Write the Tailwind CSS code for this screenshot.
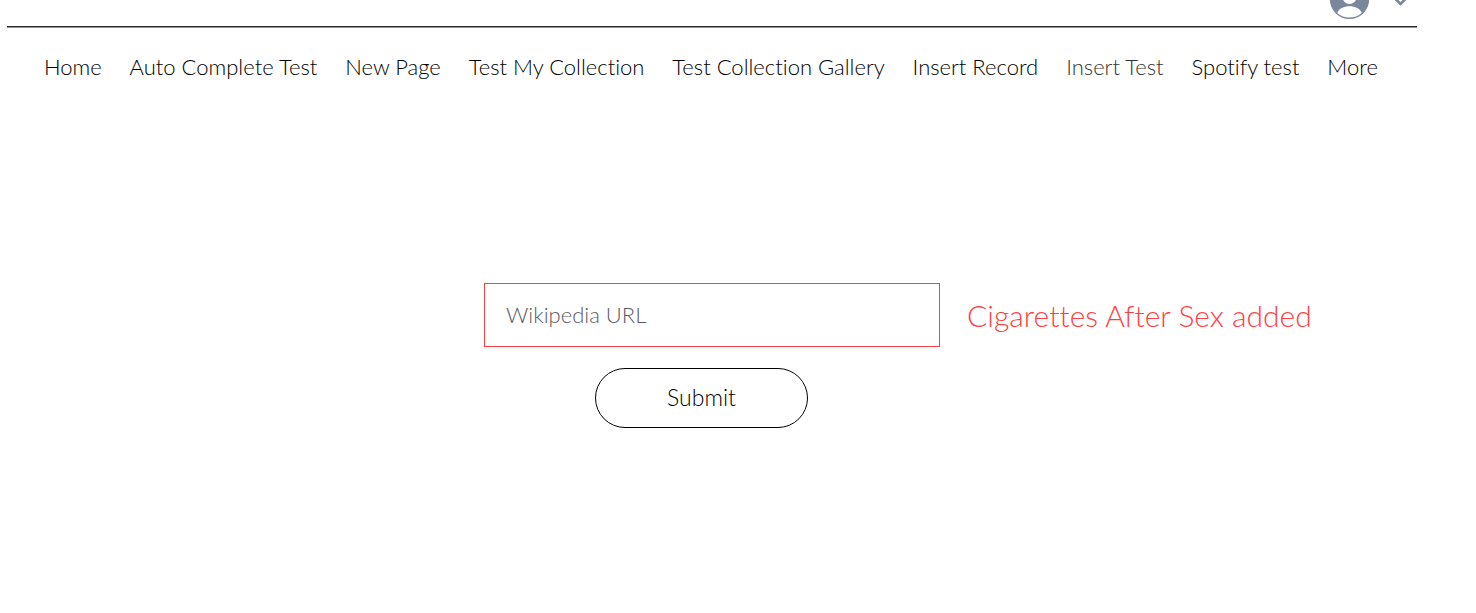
<!DOCTYPE html>
<html lang="en">
<head>
<meta charset="utf-8">
<meta name="viewport" content="width=device-width, initial-scale=1">
<title>Insert Test</title>
<script src="https://cdn.jsdelivr.net/npm/@tailwindcss/browser@4"></script>
</head>
<body class="bg-white font-['Lato',sans-serif] font-light text-black [font-variant-ligatures:none]">
<header class="ml-[7px] mr-[59px]">
  <div class="flex h-[26px] items-start justify-end pr-2">
    <button type="button" aria-label="Account menu" class="flex items-start gap-6">
      <svg class="h-5 w-10" viewBox="0 0 40 20" aria-hidden="true">
        <circle cx="20.500" cy="-0.800" r="19.700" fill="#7a879b"/>
        <circle cx="20.500" cy="-3" r="7" fill="#fff"/>
        <path d="M8.300 13C10 8.500 15 6.300 20.500 6.300s10.500 2.200 12.200 6.700C29.500 16 25 17.500 20.500 17.500S11.500 16 8.300 13Z" fill="#fff"/>
      </svg>
      <svg class="h-2 w-4" viewBox="0 0 16 8" fill="none" stroke="#7a879b" stroke-width="2.600" aria-hidden="true"><path d="M1-2.500 7.500 4 14-2.500"/></svg>
    </button>
  </div>
  <div class="h-px bg-[#2a2a2c]"></div>
  <div class="h-px bg-[#949494]"></div>
  <nav aria-label="Site" class="flex justify-between whitespace-nowrap pt-[23px] pr-[39px] pl-[37px] text-[22px] leading-8">
    <a href="#">Home</a>
    <a href="#">Auto Complete Test</a>
    <a href="#">New Page</a>
    <a href="#">Test My Collection</a>
    <a href="#">Test Collection Gallery</a>
    <a href="#">Insert Record</a>
    <a href="#" aria-current="page" class="text-[#333333]">Insert Test</a>
    <a href="#">Spotify test</a>
    <a href="#">More</a>
  </nav>
</header>
<main class="pt-[200px] pl-[484px]">
  <form class="flex items-start gap-[27px]">
    <div class="flex w-[456px] flex-col gap-[21px]">
      <input type="text" aria-label="Wikipedia URL" placeholder="Wikipedia URL" class="h-16 w-full border border-[#ff4040] px-[21px] pb-px text-[22px] outline-none placeholder:text-[#5c5c64]">
      <button type="button" class="ml-[111px] h-[60px] w-[213px] rounded-full border border-black pb-px text-[23px]">Submit</button>
    </div>
    <output class="whitespace-nowrap text-[30px] leading-16 text-[#ff4040]">Cigarettes After Sex added</output>
  </form>
</main>
</body>
</html>
